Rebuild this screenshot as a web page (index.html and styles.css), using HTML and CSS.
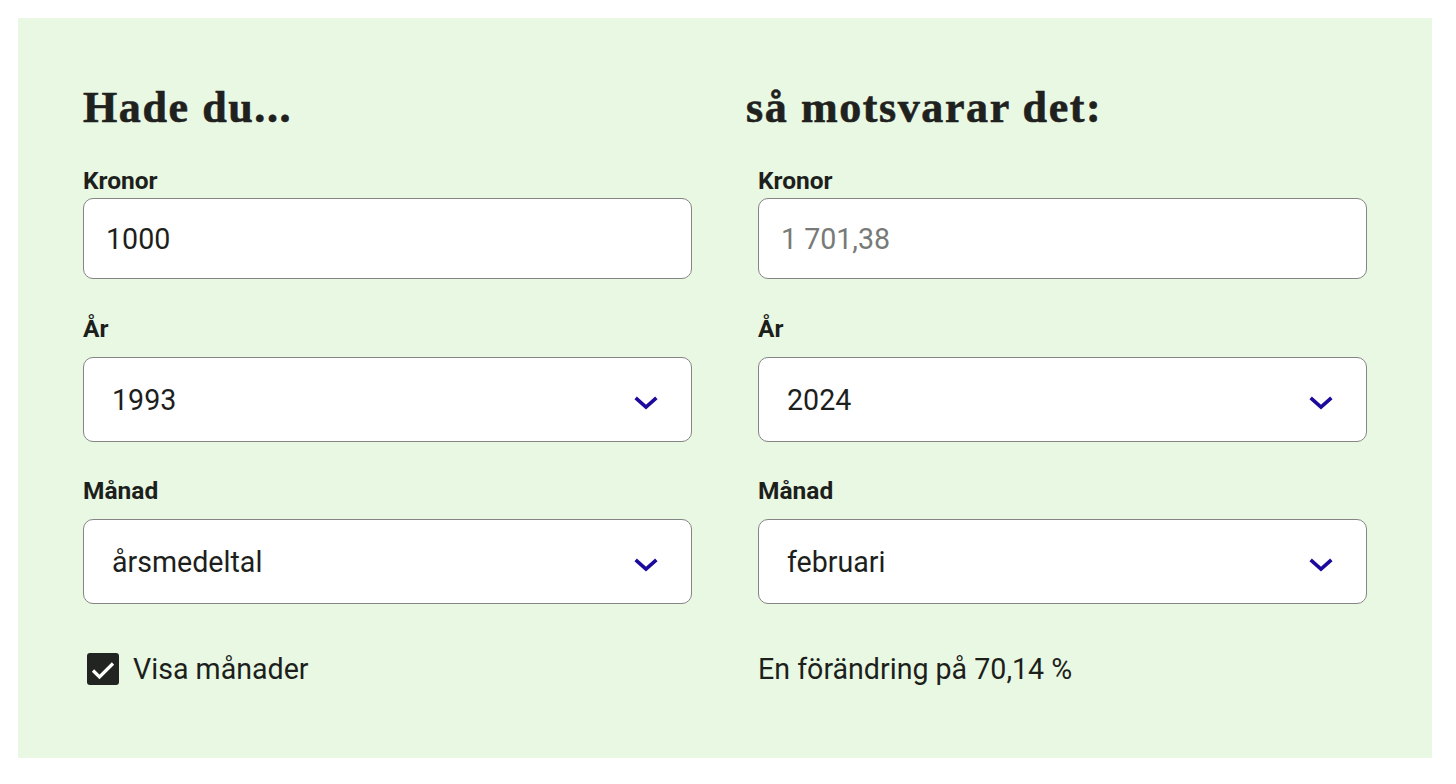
FILE: index.html
```html
<!DOCTYPE html>
<html lang="sv">
<head>
<meta charset="utf-8">
<title>Räkna om kronor</title>
<link rel="stylesheet" href="styles.css">
</head>
<body>
<div class="panel">
  <div class="headings">
    <h2 class="heading">Hade du...</h2>
    <h2 class="heading">så motsvarar det:</h2>
  </div>
  <div class="columns">
    <div class="col">
      <label class="label">Kronor</label>
      <div class="input">1000</div>
      <label class="label label-select">År</label>
      <div class="select"><span>1993</span>
        <svg class="chev" width="24" height="16" viewBox="0 0 24 16"><path d="M3 4 L12 12 L21 4" fill="none" stroke="#1c0a9c" stroke-width="3.6" stroke-linecap="square"/></svg>
      </div>
      <label class="label label-select">Månad</label>
      <div class="select last"><span>årsmedeltal</span>
        <svg class="chev" width="24" height="16" viewBox="0 0 24 16"><path d="M3 4 L12 12 L21 4" fill="none" stroke="#1c0a9c" stroke-width="3.6" stroke-linecap="square"/></svg>
      </div>
      <div class="foot">
        <span class="check"><svg width="32" height="32" viewBox="0 0 32 32"><path d="M6 17.5 L12.5 24 L26 10.5" fill="none" stroke="#fff" stroke-width="3.2"/></svg></span>
        <span class="foot-text">Visa månader</span>
      </div>
    </div>
    <div class="col">
      <label class="label">Kronor</label>
      <div class="input placeholder">1 701,38</div>
      <label class="label label-select">År</label>
      <div class="select"><span>2024</span>
        <svg class="chev" width="24" height="16" viewBox="0 0 24 16"><path d="M3 4 L12 12 L21 4" fill="none" stroke="#1c0a9c" stroke-width="3.6" stroke-linecap="square"/></svg>
      </div>
      <label class="label label-select">Månad</label>
      <div class="select last"><span>februari</span>
        <svg class="chev" width="24" height="16" viewBox="0 0 24 16"><path d="M3 4 L12 12 L21 4" fill="none" stroke="#1c0a9c" stroke-width="3.6" stroke-linecap="square"/></svg>
      </div>
      <div class="foot">
        <span class="foot-text">En förändring på 70,14 %</span>
      </div>
    </div>
  </div>
</div>
</body>
</html>
```

FILE: styles.css
```css
html, body {
  margin: 0;
  padding: 0;
  background: #ffffff;
}
body {
  padding: 18px 24px 26px 18px;
  font-family: Roboto, "Liberation Sans", sans-serif;
  color: #1d1f1d;
}
.panel {
  background: #e9f8e2;
  padding: 63px 65px 72px 65px;
}
.headings {
  display: grid;
  grid-template-columns: 663px 1fr;
  margin-bottom: 33px;
}
.heading {
  margin: 0;
  font-family: "Liberation Serif", serif;
  font-weight: 700;
  font-size: 44px;
  line-height: 53px;
  letter-spacing: 1.6px;
  -webkit-text-stroke: 0.6px #1f211f;
  color: #1f211f;
}
.columns {
  display: grid;
  grid-template-columns: 1fr 1fr;
  column-gap: 66px;
}
.col {
  display: flex;
  flex-direction: column;
}
.label {
  display: block;
  font-weight: 700;
  font-size: 24.5px;
  line-height: 28px;
  margin-bottom: 3px;
}
.label-select {
  margin-bottom: 14px;
}
.input, .select {
  box-sizing: border-box;
  background: #fff;
  border: 1.6px solid #858585;
  border-radius: 10px;
  font-size: 28.6px;
  display: flex;
  align-items: center;
  color: #1d1f1d;
}
.input {
  height: 81px;
  padding-left: 22px;
  margin-bottom: 36px;
}
.input.placeholder {
  color: #777a77;
}
.select {
  height: 85px;
  padding-left: 28px;
  padding-right: 33px;
  justify-content: space-between;
  margin-bottom: 35px;
}
.select.last {
  margin-bottom: 48px;
}
.chev {
  margin-top: 6px;
}
.foot {
  display: flex;
  align-items: center;
  gap: 14px;
  height: 34px;
}
.check {
  width: 32px;
  height: 32px;
  margin-left: 4px;
  background: #222422;
  border-radius: 3px;
  display: flex;
}
.foot-text {
  font-size: 28.6px;
}
```
